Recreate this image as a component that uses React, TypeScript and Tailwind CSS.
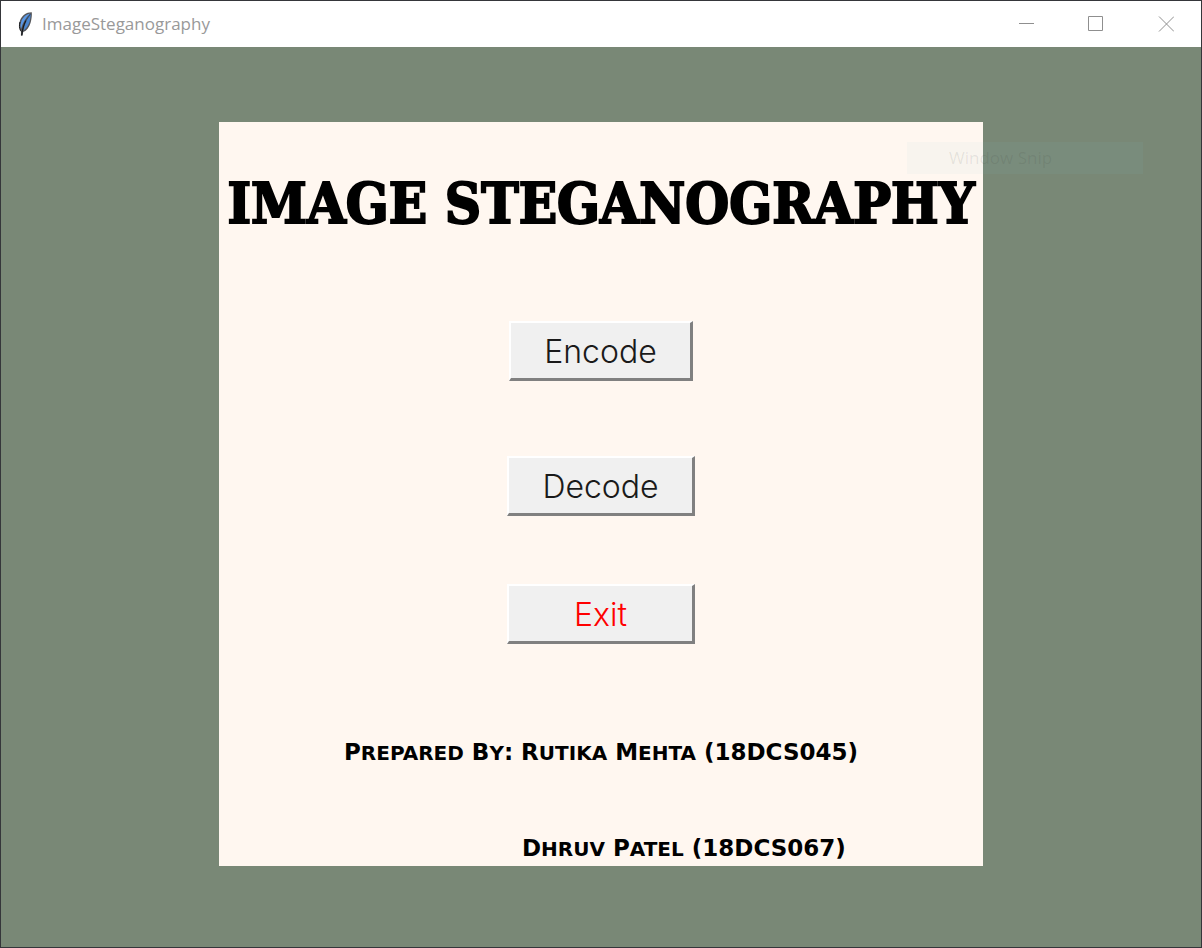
import type { ReactNode } from "react";

function Feather() {
  return (
    <svg viewBox="0 0 16 26" className="h-[26px] w-4" aria-hidden="true">
      <path d="M14.800 1.200C9.600 1 4.800 4.400 3 9.600c-1.200 3.400-1 6.800.2 9.400l.8 1.500L3.900 24.500h1.700l.6-3.400c3.600-1.500 6.200-5 7.400-9.400 1-3.600 1.500-7.300 1.200-10.500Z" fill="#55565a" />
      <path d="M13.200 2.600C9 3.400 5.600 6.600 4.200 10.700c-.9 2.700-.8 5.200-.2 7.300C5.600 12.600 8.400 7 13.200 2.600Z" fill="#5a98e6" />
      <path d="M13.600 3c.1 6-2 13-7 16.600C7.300 13.600 9.600 8 13.600 3Z" fill="#4a86d0" />
      <path d="M3 11c-.9 3-.7 6 .4 8.400l.9 1.100" fill="none" stroke="#17181b" strokeWidth="1" />
      <path d="M9 9.500C7 13 5.400 18 4.700 24.500" fill="none" stroke="#15171b" strokeWidth="1.200" />
      <path d="M13.400 3.200 9 9.500" fill="none" stroke="#1e3f6b" strokeWidth=".7" />
    </svg>
  );
}

function CaptionButton({ label, children }: { label: string; children: ReactNode }) {
  return (
    <button type="button" aria-label={label} className="flex h-full w-[70px] items-center justify-center text-[#8f8f8f]">
      <svg width="16" height="16" viewBox="0 0 16 16" fill="none" stroke="currentColor" aria-hidden="true">
        {children}
      </svg>
    </button>
  );
}

function TitleBar() {
  return (
    <header className="flex h-[46px] shrink-0 items-center bg-white pl-4">
      <Feather />
      <h1 className="flex-1 pl-[9px] font-['Open_Sans',sans-serif] text-[17px] text-[#999999]">ImageSteganography</h1>
      <CaptionButton label="Minimize">
        <path d="M1 7.500h15" />
      </CaptionButton>
      <CaptionButton label="Maximize">
        <path d="M.5.5h14v14H.5z" />
      </CaptionButton>
      <CaptionButton label="Close">
        <path d="m1 .5 15 15m0-15-15 15" />
      </CaptionButton>
    </header>
  );
}

function RaisedButton({ children, className }: { children: ReactNode; className: string }) {
  return (
    <button
      type="button"
      className={`h-[60px] border-t-2 border-r-[3px] border-b-[3px] border-l-2 border-t-white border-r-[#808080] border-b-[#808080] border-l-white bg-[#f0f0f0] pt-[2px] font-['Inter',sans-serif] text-[32px] leading-none font-light ${className}`}
    >
      {children}
    </button>
  );
}

/* Copperplate-like lettering: lowercase runs are set as tall small capitals. */
function Credit({ text, className = "" }: { text: string; className?: string }) {
  return (
    <p className={`h-8 ${className}`}>
      {text.split(/([a-z]+)/).map((part, i) =>
        i % 2 ? (
          <span key={i} className="text-[29px] [font-variant:small-caps]">
            {part}
          </span>
        ) : (
          part
        ),
      )}
    </p>
  );
}

export default function App() {
  return (
    <div className="flex min-h-screen flex-col border border-[#35363a] bg-[#798876]">
      <TitleBar />
      <main className="relative flex flex-1 justify-center px-4 pt-[75px] pb-[81px]">
        <section className="flex w-full max-w-[764px] flex-col items-center bg-[#fff7f0] text-black">
          <h2 className="pt-[46px] text-center font-['DejaVu_Serif_Condensed','DejaVu_Serif',serif] text-[56px] leading-[70px] font-bold whitespace-nowrap [-webkit-text-stroke:2px_black]">
            IMAGE STEGANOGRAPHY
          </h2>
          <RaisedButton className="mt-[83px] w-[184px] text-[#1a1a1a]">Encode</RaisedButton>
          <RaisedButton className="mt-[75px] w-[188px] text-[#1a1a1a]">Decode</RaisedButton>
          <RaisedButton className="mt-[68px] w-[188px] text-[#ff0000]">Exit</RaisedButton>
          <div className="mt-[90px] mb-[2px] flex flex-col gap-16 font-['DejaVu_Sans',sans-serif] text-[23px] leading-8 font-bold whitespace-nowrap">
            <Credit text="Prepared By: Rutika Mehta (18DCS045)" />
            <Credit text="Dhruv Patel (18DCS067)" className="pl-[178px]" />
          </div>
        </section>
        <div className="absolute top-[95px] right-[58px] w-[236px] bg-[#90c8e0]/6 pl-[42px] font-['Open_Sans',sans-serif] text-[17px] leading-8 text-[#303530]/10">
          Window Snip
        </div>
      </main>
    </div>
  );
}
